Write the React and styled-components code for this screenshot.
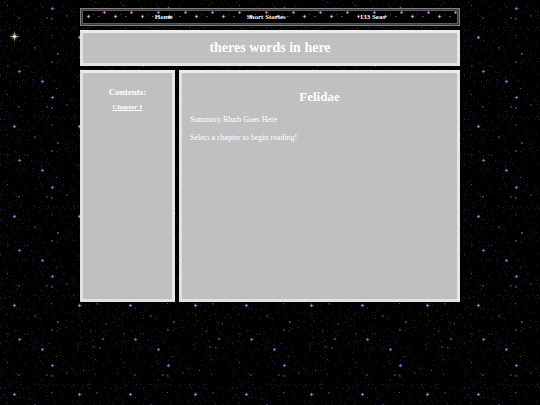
import React from "react";
import styled, { createGlobalStyle } from "styled-components";

// x, y, colour, size (0 = single dot, 1 = soft dot, 2 = small cross)
const stars = [
  [14, 37, "#86a4e8", 2],
  [79, 37, "#86a4e8", 2],
  [19, 71, "#6d8cc8", 2],
  [42, 81, "#6d94dc", 2],
  [52, 8, "#6d94dc", 2],
  [57, 53, "#4f74a8", 1],
  [102, 70, "#5c78a8", 1],
  [99, 79, "#35406e", 1],
  [34, 47, "#3c4878", 1],
  [51, 61, "#46587c", 1],
  [18, 17, "#3c4a78", 1],
  [51, 18, "#46587c", 1],
  [7, 5, "#566078", 0],
  [51, 35, "#566070", 0],
  [106, 55, "#5c6664", 0],
  [83, 13, "#6a7068", 0],
  [95, 17, "#4c5478", 0],
  [25, 7, "#26285c", 0],
  [19, 40, "#3a3e50", 0],
  [27, 66, "#32386a", 0],
  [10, 73, "#26285c", 0],
  [95, 2, "#3a3e74", 0],
  [99, 46, "#2c3068", 0],
  [78, 80, "#2c3068", 0],
  [93, 72, "#2c3068", 0],
  [73, 27, "#3c3c5c", 0],
  [4, 30, "#26285c", 0],
  [9, 28, "#2c3078", 0],
  [27, 50, "#2c3068", 0],
  [0, 30, "#30247a", 0],
  [46, 17, "#7c304e", 1],
  [66, 15, "#5e2c44", 1],
  [7, 65, "#5e2444", 1],
  [90, 63, "#744448", 0],
  [93, 78, "#703048", 1],
  [56, 88, "#844448", 0],
  [96, 35, "#702c4c", 1],
  [20, 27, "#3e2458", 0],
  [88, 31, "#4c2470", 0],
  [89, 27, "#3c2468", 0],
  [104, 30, "#4c2050", 0],
  [41, 77, "#3c4440", 0],
];

const drawStar = ([x, y, color, size]) => {
  const dot = (dx, dy, w, h, o) =>
    `<rect x="${x + dx}" y="${y + dy}" width="${w}" height="${h}" fill="${color}" opacity="${o}"/>`;
  if (size === 2) {
    return (
      dot(-1, 0, 3, 1, 0.5) +
      dot(0, -1, 1, 3, 0.5) +
      dot(0, 0, 1, 1, 1) +
      dot(-2, 0, 5, 1, 0.15) +
      dot(0, -2, 1, 5, 0.15) +
      dot(-1, -1, 3, 3, 0.2)
    );
  }
  if (size === 1) {
    return dot(0, 0, 2, 2, 0.55) + dot(0, 0, 1, 1, 0.8);
  }
  return dot(0, 0, 1, 1, 1);
};

// Faint dust between the stars, same every load
const dust = () => {
  let seed = 11;
  const next = (n) => {
    seed = (seed * 16807) % 2147483647;
    return seed % n;
  };
  const colors = ["#141418", "#1a1a1e", "#101420", "#1c1620", "#181c18", "#242430"];
  return Array.from({ length: 480 }, () => [next(116), next(89), colors[next(6)], 0]);
};

const svgUrl = (width, height, body) =>
  `url("data:image/svg+xml,${encodeURIComponent(
    `<svg xmlns="http://www.w3.org/2000/svg" width="${width}" height="${height}" shape-rendering="crispEdges">${body}</svg>`
  )}")`;

// Three star fields stacked, the tile is 268px high
const field = [...dust(), ...stars];
const spaceTile = svgUrl(
  116,
  268,
  [0, 89, 179].map((top) => field.map(([x, y, c, s]) => drawStar([x, y + top, c, s])).join("")).join("")
);

const navTile = svgUrl(
  27,
  18,
  [
    [7, 7, "#ff9cf0", 2],
    [7, 7, "#ffd0f0", 0],
    [12, 5, "#6c3c78", 0],
    [17, 7, "#8c4c90", 0],
    [18, 7, "#4c2c58", 0],
    [23, 3, "#e878f8", 2],
    [17, 15, "#a058a0", 0],
  ]
    .map(drawStar)
    .join("")
);

const GlobalStyle = createGlobalStyle`
  body {
    margin: 0;
    background: #000 ${spaceTile};
    color: #fff;
    font-family: "Liberation Serif", "Times New Roman", serif;
    font-size: 8px;
  }
`;

const Page = styled.div`
  display: grid;
  grid-template-columns: 25% 1fr;
  gap: 4px;
  width: 70.4%;
  margin: 0 auto;
  padding-top: 8px;
`;

const Nav = styled.nav`
  grid-column: 1 / -1;
  display: flex;
  justify-content: space-evenly;
  align-items: center;
  height: 16px;
  border: 1px solid #808080;
  background: #000 ${navTile};
  box-shadow: inset 0 0 0 1px #3c3c3c, inset 0 0 0 2px #5c5c5c;
`;

const NavLink = styled.a`
  color: #fff;
  font-size: 7px;
  font-weight: bold;
  line-height: 8px;
  text-decoration: none;
`;

const Panel = styled.div`
  border: 3px solid;
  border-color: #ececec #e6e6e6 #e2e2e2 #e2e2e2;
  background: #c0c0c0;
`;

const Header = styled(Panel).attrs({ as: "header" })`
  grid-column: 1 / -1;
  padding: 7px 0;
  text-align: center;
`;

const Title = styled.h1`
  margin: 0;
  font-size: 14px;
  line-height: 16px;
`;

const Sidebar = styled(Panel).attrs({ as: "aside" })`
  padding: 14px 8px;
  text-align: center;
`;

const SidebarTitle = styled.h3`
  margin: 0 0 6px;
  font-size: 9px;
  line-height: 10px;
`;

const ChapterLink = styled.a`
  display: block;
  color: #fff;
  font-size: 7px;
  font-weight: bold;
  line-height: 8px;
`;

const Main = styled(Panel).attrs({ as: "main" })`
  min-height: 210px;
  padding: 8px;
`;

const StoryTitle = styled.h2`
  margin: 8px 0 10px;
  font-size: 13px;
  line-height: 16px;
  text-align: center;
`;

const Text = styled.p`
  margin: 0 0 8px;
  line-height: 10px;
`;

const Sparkle = styled.svg`
  position: absolute;
  top: 28px;
  left: 6px;
`;

export default function App() {
  return (
    <>
      <GlobalStyle />
      <Sparkle width="17" height="17" viewBox="0 0 17 17" aria-hidden="true">
        <circle cx="8.5" cy="8.5" r="3.5" fill="#8c8468" opacity="0.35" />
        <path d="M8.5 2.5 9.2 7.8 14.5 8.5 9.2 9.2 8.5 14.5 7.8 9.2 2.5 8.5 7.8 7.8Z" fill="#a8a088" />
        <circle cx="8.5" cy="8.5" r="1.4" fill="#f4ecd4" />
      </Sparkle>
      <Page>
        <Nav>
          <NavLink href="#home">Home</NavLink>
          <NavLink href="#short-stories">Short Stories</NavLink>
          <NavLink href="#133-seas">133 Seas</NavLink>
        </Nav>
        <Header>
          <Title>theres words in here</Title>
        </Header>
        <Sidebar>
          <SidebarTitle>Contents:</SidebarTitle>
          <ChapterLink href="#chapter-1">Chapter 1</ChapterLink>
        </Sidebar>
        <Main>
          <StoryTitle>Felidae</StoryTitle>
          <Text>Summary Blurb Goes Here</Text>
          <Text>Select a chapter to begin reading!</Text>
        </Main>
      </Page>
    </>
  );
}
